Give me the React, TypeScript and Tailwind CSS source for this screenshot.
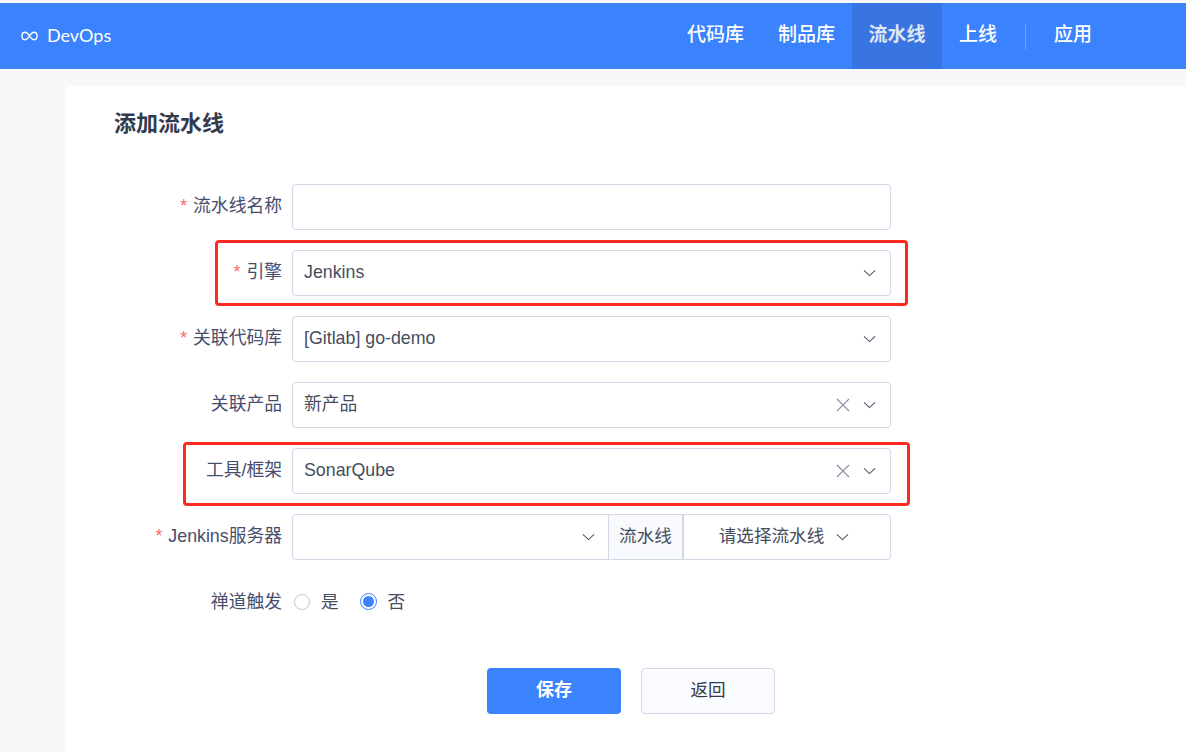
import { ReactNode } from 'react';

const fontStack = 'font-["Liberation_Sans","Noto_Sans_CJK_SC",sans-serif]';

function Chevron({ className = '' }: { className?: string }) {
  return (
    <svg viewBox="0 0 14 8" className={`w-[13px] h-[8px] text-[#4b5268] ${className}`} fill="none" stroke="currentColor" strokeWidth="1.1">
      <path d="M1 1.2 7 6.8 13 1.2" />
    </svg>
  );
}

function Clear() {
  return (
    <svg viewBox="0 0 14 14" className="w-[14px] h-[14px] text-[#8a90a3]" fill="none" stroke="currentColor" strokeWidth="1.1">
      <path d="M1 1 13 13M13 1 1 13" />
    </svg>
  );
}

function Row({ label, required, children }: { label: string; required?: boolean; children: ReactNode }) {
  return (
    <div className="flex items-center h-[46px]">
      <div className="w-[168px] pr-[10px] pb-[2px] text-right text-[17.8px] text-[#464d6e] whitespace-nowrap">
        {required && <span className="text-[#f56c6c] mr-[6px]">*</span>}
        {label}
      </div>
      <div className="w-[599px]">{children}</div>
    </div>
  );
}

function Select({ value, clearable }: { value?: string; clearable?: boolean }) {
  return (
    <div className="flex items-center h-[46px] border border-[#d3d7e8] rounded-[4px] pl-[11px] pr-[14px] text-[17.8px] text-[#464d5e]">
      <span className="flex-1 pb-[2px]">{value}</span>
      {clearable && <span className="mr-[13px] flex"><Clear /></span>}
      <Chevron />
    </div>
  );
}

export default function App() {
  return (
    <div className={`${fontStack} h-[752px] overflow-hidden bg-[#f7f8fa] pt-[3px]`}>
      <header className="flex items-center h-[66px] bg-[#3b82fd] text-white pl-[21px]">
        <svg viewBox="0 0 18 10" className="w-[17px] h-[10px] mr-[9px]" fill="none" stroke="currentColor" strokeWidth="1.4">
          <path d="M9 5C7.5 2.6 6.2 1 4.3 1 2.3 1 1 2.8 1 5s1.3 4 3.3 4C6.2 9 7.5 7.4 9 5c1.5-2.4 2.8-4 4.7-4C15.700 1 17 2.800 17 5s-1.300 4-3.300 4C11.800 9 10.500 7.400 9 5Z" />
        </svg>
        <span className="text-[18px] pb-[2px] font-['Lato',sans-serif]">DevOps</span>
        <nav className="ml-auto flex items-stretch h-full text-[19px] font-medium">
          <a className="flex items-center w-[91px] pb-[2px] justify-center">代码库</a>
          <a className="flex items-center w-[91px] pb-[2px] justify-center">制品库</a>
          <a className="flex items-center w-[90px] pb-[2px] justify-center bg-[#3874e2] text-[#dfe6f2] font-bold">流水线</a>
          <a className="flex items-center w-[72px] pb-[2px] justify-center">上线</a>
          <div className="self-center h-[27px] w-px bg-white/25 ml-[11px]" />
          <a className="flex items-center w-[160px] pb-[2px] pl-[28px]">应用</a>
        </nav>
      </header>

      <main className="pl-[65px] pt-[17px]">
        <div className="relative bg-white rounded-tl-[6px] h-[700px] pl-[49px] pt-[21px]">
          <h1 className="text-[22px] leading-[34px] font-bold text-[#333a4d]">添加流水线</h1>

          <div className="mt-[43px] flex flex-col gap-[20px] ml-[10px]">
            <Row label="流水线名称" required>
              <div className="h-[46px] border border-[#d3d7e8] rounded-[4px]" />
            </Row>
            <Row label="引擎" required><Select value="Jenkins" /></Row>
            <Row label="关联代码库" required><Select value="[Gitlab] go-demo" /></Row>
            <Row label="关联产品"><Select value="新产品" clearable /></Row>
            <Row label="工具/框架"><Select value="SonarQube" clearable /></Row>
            <Row label="Jenkins服务器" required>
              <div className="flex h-[46px] border border-[#d3d7e8] rounded-[4px] text-[17.6px] text-[#464d5e]">
                <div className="w-[315px] flex items-center justify-end pr-[13px]"><Chevron /></div>
                <div className="w-[75px] flex items-center justify-center pb-[2px] bg-[#f9fafe] border-x border-[#d3d7e8]">流水线</div>
                <div className="flex-1 flex items-center justify-center gap-[12px] border-l border-[#d3d7e8] pr-[6px]">
                  <span className="pb-[2px]">请选择流水线</span>
                  <Chevron />
                </div>
              </div>
            </Row>
            <div className="flex items-center h-[44px]">
              <div className="w-[168px] pr-[10px] text-right text-[17.8px] text-[#464d6e]">禅道触发</div>
              <div className="flex items-center text-[17.6px] text-[#464d5e]">
                <span className="w-[16px] h-[16px] rounded-full border border-[#c3c7d3] bg-white ml-[2px] mr-[11px]" />
                <span>是</span>
                <span className="flex items-center justify-center w-[17px] h-[17px] rounded-full border border-[#3b82fd] ml-[21px] mr-[11px]">
                  <span className="w-[11px] h-[11px] rounded-full bg-[#3b82fd]" />
                </span>
                <span>否</span>
              </div>
            </div>
          </div>

          <div className="mt-[44px] ml-[373px] flex gap-[20px]">
            <button className="w-[134px] h-[46px] pb-[2px] rounded-[4px] bg-[#3b82fd] text-white text-[18px] font-bold">保存</button>
            <button className="w-[134px] h-[46px] pb-[2px] rounded-[4px] bg-[#fbfcff] border border-[#d3d7e8] text-[#333a4d] text-[17.6px]">返回</button>
          </div>

          {/* red annotation boxes drawn over the form */}
          <div className="absolute left-[150px] top-[154px] w-[693px] h-[66px] border-[3px] border-[#ff2a1f] rounded-[4px]" />
          <div className="absolute left-[118px] top-[356px] w-[727px] h-[64px] border-[3px] border-[#ff2a1f] rounded-[4px]" />
        </div>
      </main>
    </div>
  );
}
